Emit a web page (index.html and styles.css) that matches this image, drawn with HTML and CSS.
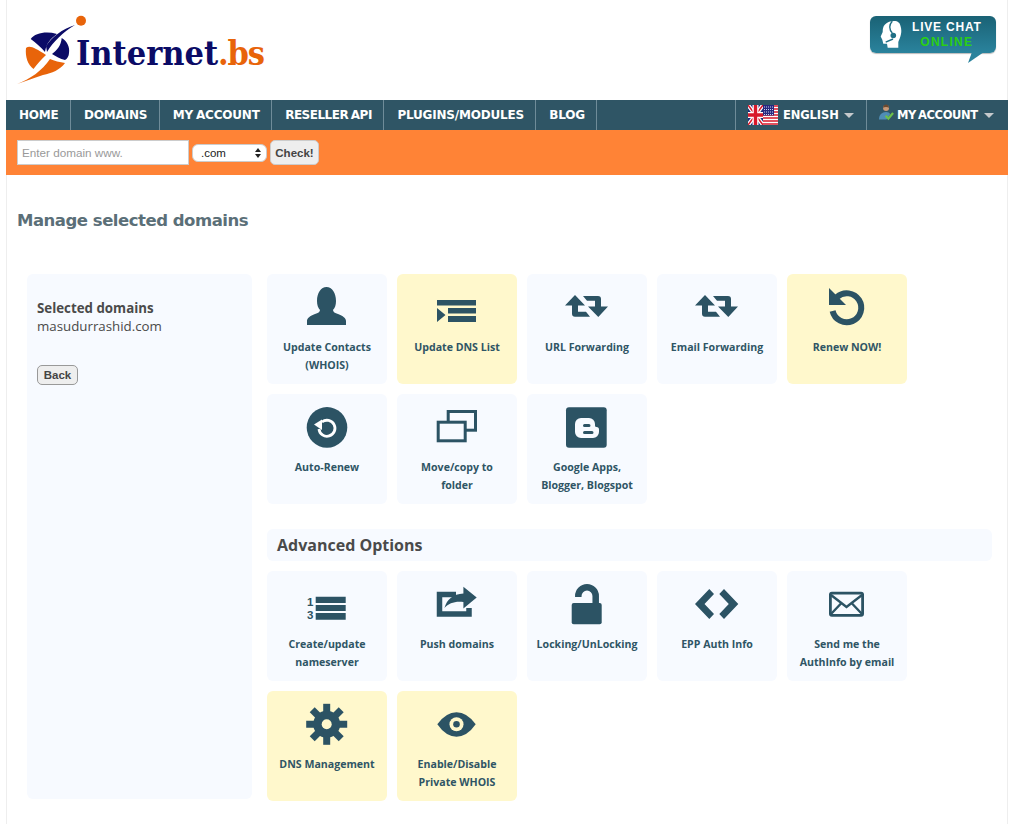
FILE: index.html
```html
<!DOCTYPE html>
<html lang="en">
<head>
    <meta charset="UTF-8">
    <title>Internet.bs - Manage selected domains</title>
    <link rel="stylesheet" href="styles.css">
</head>
<body>
<div class="page">
    <header class="top">
        <a class="logo" href="#">
            <svg class="logo-mark" viewBox="0 0 80 90" width="80" height="90">
                <g transform="translate(-6 0)">
                    <circle cx="81" cy="20.7" r="5" fill="#e8640a"/>
                    <path fill="#0b0b66" d="M30.7 39C35 33 46 31 57 34C50 39 46 44 45 52C41 47 36 43 30.7 39Z"/>
                    <path fill="#0b0b66" d="M75 25C62 29 52 37 46 46L47 52C53 42 63 32 75 25Z"/>
                    <path fill="#0b0b66" d="M61.7 38C67 41 70 47 69 53C69 56 67 59 65 60C60 59 56 56 52 54C57 50 61 46 61.7 38Z"/>
                    <path fill="#e8640a" d="M26 48C30 45 35 48 46 55C41 60 37 64 33.5 69C28 65 25 57 26 48Z"/>
                    <path fill="#e8640a" d="M17 84C30 79 42 71 50 59C54 61 60 62 65 63C60 70 52 73 43 75C34 78 26 81 17 84Z"/>
                </g>
            </svg>
            <span class="logo-text">Internet<em>.bs</em></span>
        </a>
        <a class="chat" href="#">
            <svg class="chat-head" viewBox="0 0 24 27" width="24" height="27">
                <path fill="#fff" d="M5 3.5C7 1 11 0 14 0C18 0 20 2 20.5 5C21.5 8 21.5 11 21 13C20.5 16 19 19 18.3 21V26.8H7.7L7 22.8H3.3L2.3 18.8L0.7 15.5L2.7 11C2.7 8 3 5.5 5 3.5Z"/>
                <path fill="none" stroke="#1f6f85" stroke-width="1.4" d="M12.3 0.2C9.5 3 8.5 8 12.3 12M5.7 21.2L13 18"/>
                <circle cx="13.3" cy="14.5" r="2.8" fill="#1f6f85"/>
            </svg>
            <span class="chat-text">LIVE CHAT<b>ONLINE</b></span>
        </a>
    </header>

    <nav class="nav">
        <a href="#">HOME</a>
        <a href="#">DOMAINS</a>
        <a href="#">MY ACCOUNT</a>
        <a class="tight" href="#">RESELLER API</a>
        <a href="#">PLUGINS/MODULES</a>
        <a href="#">BLOG</a>
        <div class="nav-right">
            <a class="lang" href="#">
                <svg viewBox="0 0 30 20" width="30" height="20">
                    <rect width="15" height="20" fill="#1c2a7a"/>
                    <path stroke="#fff" stroke-width="4" d="M0 0L15 20M15 0L0 20"/>
                    <path stroke="#d8182a" stroke-width="1.5" d="M0 0L15 20M15 0L0 20"/>
                    <path stroke="#fff" stroke-width="6" d="M7.5 0V20M0 10H15"/>
                    <path stroke="#d8182a" stroke-width="3.4" d="M7.5 0V20M0 10H15"/>
                    <rect x="15" width="15" height="20" fill="#fff"/>
                    <path stroke="#d8182a" stroke-width="1.6" d="M15 1H30M15 4H30M15 7H30M15 10H30M15 13H30M15 16H30M15 19H30"/>
                    <rect x="15" width="11" height="10.5" fill="#27297f"/>
                    <path stroke="#cdd0ee" stroke-width="1" stroke-dasharray="1 1" d="M16 2H26M16 4.5H26M16 7H26M16 9.5H26"/>
                </svg>
                <span>ENGLISH</span><i class="caret"></i>
            </a>
            <a class="acct" href="#">
                <svg viewBox="0 0 16 17" width="15" height="17">
                    <circle cx="7.5" cy="3.6" r="3.2" fill="#c89a78"/>
                    <path fill="#6b4a30" d="M4.3 3.4C4.3 1 6 0 7.5 0S10.7 1 10.7 3.4C9 2.2 6 2.2 4.3 3.4Z"/>
                    <path fill="#4f8db5" d="M0 16C0 11 3 8 7.5 8C10 8 11 9 12 10L8 16Z"/>
                    <path fill="none" stroke="#6cc04a" stroke-width="2.4" d="M7 12L10 15L15 9"/>
                </svg>
                <span>MY ACCOUNT</span><i class="caret"></i>
            </a>
        </div>
    </nav>

    <form class="domain-bar">
        <input class="domain-input" type="text" placeholder="Enter domain www.">
        <span class="tld">
            <select class="tld-select">
                <option>.com</option>
                <option>.net</option>
                <option>.bs</option>
            </select>
            <svg class="tld-arrows" viewBox="0 0 6 10" width="6" height="10">
                <path fill="#222" d="M3 0L6 4H0ZM3 10L0 6H6Z"/>
            </svg>
        </span>
        <button class="btn btn-check" type="button">Check!</button>
    </form>

    <main class="main">
        <h2 class="title">Manage selected domains</h2>
        <div class="columns">
            <aside class="sidebar">
                <p class="selected"><b>Selected domains</b><br>masudurrashid.com</p>
                <button class="btn btn-back" type="button">Back</button>
            </aside>
            <section class="content">
                <div class="cards">
                    <a class="card" href="#">
                        <svg class="icon" viewBox="0 0 44 44"><path d="M2 41V37C2 34 5 32 10 30C13 29 15 28 15 26C13 24 12 21 12 17C12 9 16 3 21.5 3S31 9 31 17C31 21 30 24 28 26C28 28 30 29 33 30C38 32 41 34 41 37V41Z"/></svg>
                        <span>Update Contacts (WHOIS)</span>
                    </a>
                    <a class="card hot" href="#">
                        <svg class="icon" viewBox="0 0 44 44"><path d="M2 16H41V21.5H2ZM13 24H41V29.5H13ZM13 32H41V38H13ZM2 24L10.5 31L2 38Z"/></svg>
                        <span>Update DNS List</span>
                    </a>
                    <a class="card" href="#">
                        <svg class="icon" viewBox="0 0 44 44"><path d="M10 11L20 21.5H13V27.7H21L25 32.7H10Q7 32.7 7 29.7V21.5H0ZM33.3 33L23 22.5H30V16.7H22L18 12H33Q36 12 36 15V22.5H43Z"/></svg>
                        <span>URL Forwarding</span>
                    </a>
                    <a class="card" href="#">
                        <svg class="icon" viewBox="0 0 44 44"><path d="M10 11L20 21.5H13V27.7H21L25 32.7H10Q7 32.7 7 29.7V21.5H0ZM33.3 33L23 22.5H30V16.7H22L18 12H33Q36 12 36 15V22.5H43Z"/></svg>
                        <span>Email Forwarding</span>
                    </a>
                    <a class="card hot" href="#">
                        <svg class="icon" viewBox="0 0 44 44"><path d="M4 4V21H21Z"/><path class="line" stroke-width="6" d="M12 13A14.5 14.5 0 1 1 7.6 27"/></svg>
                        <span>Renew NOW!</span>
                    </a>
                    <a class="card" href="#">
                        <svg class="icon" viewBox="0 0 44 44"><circle cx="22" cy="23.4" r="20.3"/><path fill="#fff" d="M9 20.5L17 15.5V26Z"/><path fill="none" stroke="#fff" stroke-width="2.8" d="M17 18A8 8 0 1 1 14 25"/></svg>
                        <span>Auto-Renew</span>
                    </a>
                    <a class="card" href="#">
                        <svg class="icon" viewBox="0 0 44 44"><rect class="line" stroke-width="3" x="13.2" y="7.5" width="27.3" height="18.7"/><rect class="line bg" stroke-width="3" x="3.2" y="18.2" width="27" height="18.6"/></svg>
                        <span>Move/copy to folder</span>
                    </a>
                    <a class="card" href="#">
                        <svg class="icon" viewBox="0 0 44 44"><rect x="1" y="3.3" width="40.7" height="40.4" rx="3"/><path fill="#f7faff" d="M16 14H24A6 6 0 0 1 30 20V21.5A1.5 1.5 0 0 0 31.5 23A2.5 2.5 0 0 1 34 25.5V28A6 6 0 0 1 28 34H16A6 6 0 0 1 10 28V20A6 6 0 0 1 16 14Z"/><path d="M18 21.5A1.5 1.5 0 0 1 19.5 20H24A1.5 1.5 0 0 1 24 23H19.5A1.5 1.5 0 0 1 18 21.5ZM18 28.5A1.5 1.5 0 0 1 19.5 27H27A1.5 1.5 0 0 1 27 30H19.5A1.5 1.5 0 0 1 18 28.5Z"/></svg>
                        <span>Google Apps, Blogger, Blogspot</span>
                    </a>
                </div>

                <h3 class="section-head">Advanced Options</h3>

                <div class="cards">
                    <a class="card" href="#">
                        <svg class="icon" viewBox="0 0 44 44"><path d="M10.7 15.7H40.7V22H10.7ZM10.7 24H40.7V30H10.7ZM10.7 32H40.7V38.7H10.7Z"/><text class="num" x="2" y="25">1</text><text class="num" x="2" y="38">3</text></svg>
                        <span>Create/update nameserver</span>
                    </a>
                    <a class="card" href="#">
                        <svg class="icon" viewBox="0 0 44 44"><path class="line" stroke-width="5.5" d="M21 13.5H4.5V33H34V27"/><path d="M28.4 5.7L41.7 16.4L28.4 27.4V21C20 20 14 22 9.4 27C12 18 18 13 28.4 12.4Z"/></svg>
                        <span>Push domains</span>
                    </a>
                    <a class="card" href="#">
                        <svg class="icon" viewBox="0 0 44 44"><rect x="6.7" y="22" width="30" height="21.3" rx="2"/><path class="line" stroke-width="6.5" d="M13.3 16V15A8.7 8.7 0 0 1 30.7 15V23"/></svg>
                        <span>Locking/UnLocking</span>
                    </a>
                    <a class="card" href="#">
                        <svg class="icon" viewBox="0 0 44 44"><path d="M14.3 8L19 13L9.5 23L19 33L14.3 38L0 23ZM29 8L24.3 13L33.8 23L24.3 33L29 38L43.3 23Z"/></svg>
                        <span>EPP Auth Info</span>
                    </a>
                    <a class="card" href="#">
                        <svg class="icon" viewBox="0 0 44 44"><rect class="line" stroke-width="2.8" x="5.4" y="12.1" width="32.2" height="22.2" rx="1.5"/><path class="line" stroke-width="2.4" d="M6 14L21.5 26L37 14M6 33L16 22.5M37 33L27 22.5"/></svg>
                        <span>Send me the AuthInfo by email</span>
                    </a>
                    <a class="card hot" href="#">
                        <svg class="icon" viewBox="0 0 44 44"><circle cx="21.7" cy="23.3" r="13.5"/><g class="line" stroke-width="7"><path d="M21.7 2.8V43.8"/><path d="M1.2 23.3H42.2"/><path d="M7.2 8.8L36.2 37.8"/><path d="M36.2 8.8L7.2 37.8"/></g><circle class="hole" cx="21.7" cy="23.3" r="5"/></svg>
                        <span>DNS Management</span>
                    </a>
                    <a class="card hot" href="#">
                        <svg class="icon" viewBox="0 0 44 44"><path d="M2.3 23.3Q11 11.3 21.5 11.3T40.7 23.3Q32 35.7 21.5 35.7T2.3 23.3Z"/><circle class="hole" cx="21.5" cy="23.3" r="7"/><circle cx="21.5" cy="23.3" r="3.3"/></svg>
                        <span>Enable/Disable Private WHOIS</span>
                    </a>
                </div>
            </section>
        </div>
    </main>
</div>
</body>
</html>
```

FILE: styles.css
```css
html, body {
    margin: 0;
    padding: 0;
    background: #fff;
}
a {
    text-decoration: none;
    color: inherit;
}
.page {
    width: 1002px;
    height: 824px;
    margin-left: 6px;
    overflow: hidden;
    box-sizing: border-box;
    box-shadow: inset 1px 0 0 #eeeeee, inset -1px 0 0 #eeeeee;
}

/* header */
.top {
    height: 100px;
    display: flex;
    justify-content: space-between;
    align-items: flex-start;
}
.logo {
    display: flex;
    align-items: flex-start;
}
.logo-mark {
    flex: none;
}
.logo-text {
    font-family: "DejaVu Serif Condensed", "Liberation Serif", serif;
    font-weight: bold;
    font-size: 34px;
    line-height: 44px;
    margin: 31px 0 0 -10px;
    color: #0b0b66;
}
.logo-text em {
    font-style: normal;
    color: #e8640a;
    letter-spacing: -1.2px;
}
.chat {
    position: relative;
    width: 126px;
    height: 37px;
    margin: 16px 12px 0 0;
    display: flex;
    align-items: center;
    gap: 8px;
    padding-left: 10px;
    box-sizing: border-box;
    border-radius: 6px;
    background: linear-gradient(#1a6275, #2a839d);
    box-shadow: 0 1px 1px #bbb;
}
.chat::after {
    content: "";
    position: absolute;
    left: 98px;
    top: 36px;
    width: 16px;
    height: 11px;
    background: #2a839d;
    clip-path: polygon(0 100%, 4px 0, 100% 0);
}
.chat-text {
    font-family: "Liberation Sans", sans-serif;
    font-weight: bold;
    font-size: 12px;
    letter-spacing: 0.8px;
    line-height: 15px;
    color: #fff;
    text-align: center;
}
.chat-text b {
    display: block;
    color: #2bcf12;
    letter-spacing: 1.3px;
}

/* nav */
.nav {
    height: 30px;
    display: flex;
    background: #2f5565;
    color: #fff;
    font-family: "DejaVu Sans", sans-serif;
    font-weight: bold;
    font-size: 12px;
    letter-spacing: -0.2px;
    word-spacing: -1px;
    line-height: 30px;
    white-space: nowrap;
}
.nav a {
    padding: 0 11.5px 0 13px;
    border-right: 1px solid #6f8c99;
}
.nav .tight {
    letter-spacing: -0.5px;
}
.nav-right {
    margin-left: auto;
    display: flex;
    border-left: 1px solid #6f8c99;
    font-size: 11.5px;
}
.nav .lang {
    display: flex;
    align-items: center;
    gap: 5px;
    width: 131px;
    box-sizing: border-box;
    padding: 0 0 0 12px;
    letter-spacing: -0.1px;
}
.nav .acct {
    display: flex;
    align-items: center;
    gap: 3px;
    width: 141px;
    box-sizing: border-box;
    padding: 0 0 0 12px;
    border-right: 0;
    letter-spacing: -0.4px;
    word-spacing: -1.5px;
}
.acct svg {
    margin-top: -5px;
}
.caret {
    width: 0;
    height: 0;
    border-left: 5px solid transparent;
    border-right: 5px solid transparent;
    border-top: 5px solid #c5c9cc;
}
.acct .caret {
    margin-left: 3px;
}

/* search bar */
.domain-bar {
    height: 45px;
    margin: 0;
    background: #ff8336;
    display: flex;
    align-items: center;
    padding: 0 0 0 11px;
    gap: 3px;
}
.domain-input {
    width: 172px;
    height: 25px;
    box-sizing: border-box;
    border: 1px solid #ccc;
    padding: 0 4px;
    font-family: "Liberation Sans", sans-serif;
    font-size: 11.7px;
    background: #fff;
}
.domain-input::placeholder {
    color: #999;
    opacity: 1;
}
.tld {
    position: relative;
    display: flex;
}
.tld-select {
    appearance: none;
    width: 75px;
    height: 18px;
    box-sizing: border-box;
    border: 1px solid #ccc;
    border-radius: 6px;
    background: #fff;
    padding: 0 0 0 8px;
    font-family: "Liberation Sans", sans-serif;
    font-size: 11.5px;
    color: #222;
}
.tld-arrows {
    position: absolute;
    right: 6px;
    top: 4px;
}
.btn {
    font-family: "Liberation Sans", sans-serif;
    font-weight: bold;
    font-size: 11.5px;
    color: #444;
    background: #eeeeee;
    padding: 0;
}
.btn-check {
    width: 49px;
    height: 25px;
    border: 1px solid #ccc;
    border-radius: 5px;
}

/* main */
.main {
    padding: 36px 16px 0 11px;
}
.title {
    margin: 0 0 43px;
    font-family: "DejaVu Sans", sans-serif;
    font-weight: bold;
    font-size: 16.5px;
    letter-spacing: -0.48px;
    line-height: 20px;
    color: #5b6f78;
}
.columns {
    display: flex;
    align-items: flex-start;
    gap: 15px;
    padding-left: 10px;
}
.sidebar {
    width: 225px;
    height: 525px;
    flex: none;
    box-sizing: border-box;
    padding: 25px 10px;
    background: #f7faff;
    border-radius: 6px;
}
.selected {
    margin: 0 0 30px;
    font-family: "Open Sans", sans-serif;
    font-size: 13.3px;
    line-height: 18px;
    color: #4a4a4a;
}
.btn-back {
    display: block;
    width: 41px;
    height: 20px;
    border: 1px solid #999;
    border-radius: 5px;
}
.content {
    width: 725px;
}
.cards {
    display: flex;
    flex-wrap: wrap;
    gap: 10px;
    width: 650px;
}
.card {
    width: 120px;
    height: 110px;
    box-sizing: border-box;
    padding: 10px 10px 0;
    display: flex;
    flex-direction: column;
    align-items: center;
    background: #f7faff;
    border-radius: 6px;
    color: #2f5565;
    font-family: "Open Sans", sans-serif;
    font-weight: bold;
    font-size: 10.6px;
    line-height: 18px;
    text-align: center;
}
.card.hot {
    background: #fff8cc;
}
.icon {
    width: 44px;
    height: 44px;
    flex: none;
    margin-bottom: 10px;
    fill: #2c5364;
}
.line {
    fill: none;
    stroke: #2c5364;
}
.line.bg {
    fill: #f7faff;
}
.hole {
    fill: #fff8cc;
}
.num {
    font-family: "Liberation Sans", sans-serif;
    font-weight: bold;
    font-size: 11.5px;
}
.section-head {
    height: 32px;
    margin: 25px 0 10px;
    padding-left: 10px;
    background: #f7faff;
    border-radius: 6px;
    font-family: "Open Sans", sans-serif;
    font-weight: bold;
    font-size: 16px;
    line-height: 32px;
    color: #4a4a4a;
}
```
